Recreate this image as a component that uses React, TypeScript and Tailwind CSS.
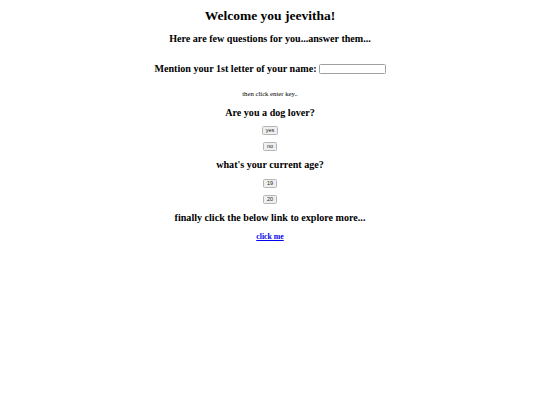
import React from "react";

const serif = { fontFamily: '"Liberation Serif", "Times New Roman", serif' };

function Btn({ label, w }: { label: string; w: string }) {
  return (
    <div className="flex justify-center">
      <button
        className={`${w} h-[9px] flex items-center justify-center border border-[#b5b5b5] bg-[#efefef] rounded-[1.5px] text-[5.5px] leading-none text-[#222] font-['Liberation_Sans']`}
      >
        {label}
      </button>
    </div>
  );
}

export default function App() {
  return (
    <div className="w-[540px] h-[405px] bg-white text-black flex flex-col items-center" style={serif}>
      <div className="h-[32px] flex items-center font-bold text-[13.5px]">Welcome you jeevitha!</div>
      <div className="h-[14px] flex items-center font-bold text-[10.1px]">Here are few questions for you...answer them...</div>
      <div className="mt-[14px] h-[18px] flex items-center font-bold text-[10.1px]">
        <span>Mention your 1st letter of your name:</span>
        <span className="ml-[2px] w-[67px] h-[10px] border border-[#a0a0a0] rounded-[1.5px] bg-white inline-block" />
      </div>
      <div className="mt-[12px] h-[8px] flex items-center text-[6.7px]">then click enter key..</div>
      <div className="mt-[8px] h-[14px] flex items-center font-bold text-[10.1px]">Are you a dog lover?</div>
      <div className="mt-[6px]"><Btn label="yes" w="w-[16px]" /></div>
      <div className="mt-[7px]"><Btn label="no" w="w-[14px]" /></div>
      <div className="mt-[7px] h-[14px] flex items-center font-bold text-[10.1px]">what's your current age?</div>
      <div className="mt-[7px]"><Btn label="19" w="w-[14px]" /></div>
      <div className="mt-[7px]"><Btn label="20" w="w-[14px]" /></div>
      <div className="mt-[7px] h-[14px] flex items-center font-bold text-[10.1px]">finally click the below link to explore more...</div>
      <div className="mt-[7px] h-[10px] flex items-center font-bold text-[7.8px]">
        <span className="text-[#0000ee] underline cursor-pointer">click me</span>
      </div>
    </div>
  );
}
